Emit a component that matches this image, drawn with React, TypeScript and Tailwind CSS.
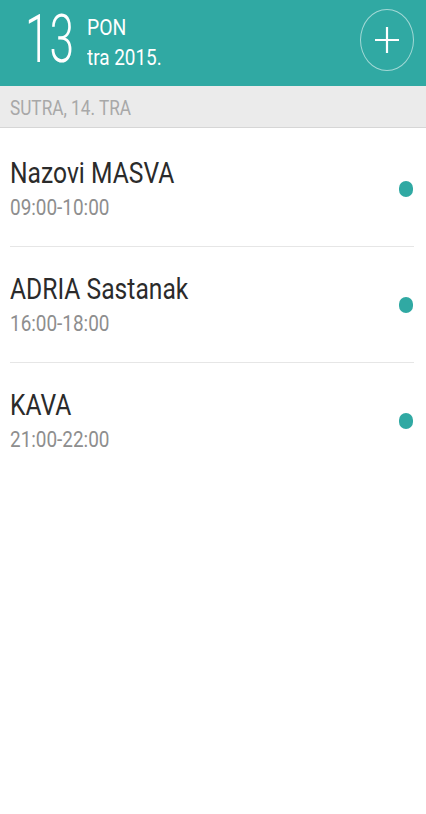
import React from "react";

const events = [
  { title: "Nazovi MASVA", time: "09:00-10:00" },
  { title: "ADRIA Sastanak", time: "16:00-18:00" },
  { title: "KAVA", time: "21:00-22:00" },
];

export default function App() {
  return (
    <div className="w-[426px] h-[814px] bg-white font-['Roboto',sans-serif] overflow-hidden">
      <header className="h-[86px] bg-[#30a9a3] flex items-start pl-[25px] pr-[12px] text-white">
        <div className="w-[62px] mt-[6px]">
          <span className="block text-[67px] font-light leading-none origin-left scale-x-[0.66] whitespace-nowrap">13</span>
        </div>
        <div className="flex flex-col leading-none mt-[17px]">
          <span className="block text-[22px] leading-none origin-left scale-x-[0.88] whitespace-nowrap">PON</span>
          <span className="block text-[22px] leading-none mt-[8px] origin-left scale-x-[0.86] whitespace-nowrap">tra 2015.</span>
        </div>
        <button className="ml-auto mt-[9px] w-[54px] h-[62px] rounded-[50%] border-[1.5px] border-white/55 flex items-center justify-center">
          <svg width="24" height="26" viewBox="0 0 24 26" stroke="white" strokeWidth="2.2">
            <path d="M12 0v26M0 13h24" />
          </svg>
        </button>
      </header>
      <div className="h-[42px] bg-[#ebebeb] border-b border-[#d6d6d6] px-[10px] pt-[12px]">
        <span className="block text-[20px] leading-none text-[#a8a8a8] origin-left scale-x-[0.86] whitespace-nowrap">SUTRA, 14. TRA</span>
      </div>
      <ul className="pl-[10px] pr-[12px] pt-[3px]">
        {events.map((e, i) => (
          <li
            key={e.title}
            className={`h-[116px] flex items-center ${i < events.length - 1 ? "border-b border-[#e6e6e6]" : ""}`}
          >
            <div className="flex-1 self-start pt-[28px] flex flex-col">
              <span className="block text-[29px] text-[#2b2b2b] leading-none origin-left scale-x-[0.85] whitespace-nowrap">{e.title}</span>
              <span className="block text-[22px] text-[#8e8e8e] leading-none mt-[9px] origin-left scale-x-[0.86] whitespace-nowrap">{e.time}</span>
            </div>
            <span className="w-[14px] h-[16px] rounded-full bg-[#30a9a3] mr-[1px]" />
          </li>
        ))}
      </ul>
    </div>
  );
}
